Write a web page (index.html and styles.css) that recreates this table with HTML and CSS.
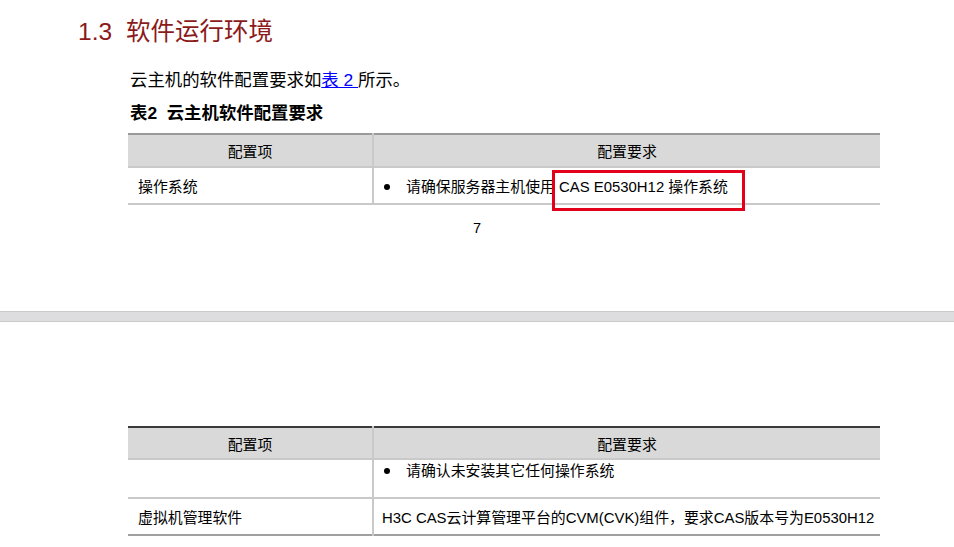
FILE: index.html
```html
<!DOCTYPE html>
<html lang="zh-CN">
<head>
<meta charset="utf-8">
<title>1.3 软件运行环境</title>
<link rel="stylesheet" href="styles.css">
</head>
<body>
<div class="page page-one">
  <h2 class="section-title"><span class="num">1.3</span>软件运行环境</h2>
  <div class="content">
    <p class="para">云主机的软件配置要求如<a class="xref" href="#t2">表 2 </a>所示。</p>
    <p class="caption" id="t2">表2&nbsp; 云主机软件配置要求</p>
    <table class="spec">
      <colgroup><col class="c1"><col class="c2"></colgroup>
      <thead>
        <tr><th>配置项</th><th class="th2">配置要求</th></tr>
      </thead>
      <tbody>
        <tr class="r-os"><td>操作系统</td><td class="td2"><span class="dot"></span>请确保服务器主机使用 CAS E0530H12 操作系统</td></tr>
      </tbody>
    </table>
  </div>
  <div class="page-num">7</div>
  <div class="highlight"></div>
</div>
<div class="page-gap"></div>
<div class="page page-two">
  <div class="content">
    <table class="spec spec-two">
      <colgroup><col class="c1"><col class="c2"></colgroup>
      <thead>
        <tr><th>配置项</th><th class="th2">配置要求</th></tr>
      </thead>
      <tbody>
        <tr class="r-cont"><td></td><td class="td2"><span class="dot"></span>请确认未安装其它任何操作系统</td></tr>
        <tr class="r-vm"><td>虚拟机管理软件</td><td class="td2">H3C CAS云计算管理平台的CVM(CVK)组件，要求CAS版本号为E0530H12</td></tr>
      </tbody>
    </table>
  </div>
</div>
</body>
</html>
```

FILE: styles.css
```css
html, body {
  margin: 0;
  padding: 0;
  background: #ffffff;
}
body {
  width: 954px;
  font-family: "Liberation Sans", "Noto Sans CJK SC", sans-serif;
  color: #000;
}
.page {
  position: relative;
}
.page-one {
  height: 311px;
  padding-top: 17px;
  box-sizing: border-box;
}
.section-title {
  margin: 0 0 0 78px;
  font-size: 24.5px;
  line-height: 30px;
  font-weight: normal;
  color: #8b1a1a;
}
.section-title .num {
  margin-right: 14px;
}
.content {
  margin-left: 128px;
  width: 752px;
}
.para {
  margin: 21px 0 0 2px;
  font-size: 17.4px;
  line-height: 24px;
}
.xref {
  color: #0000ff;
  text-decoration: underline;
}
.caption {
  margin: 10px 0 0 2px;
  font-size: 17.4px;
  line-height: 22px;
  font-weight: 600;
}
.spec {
  margin-top: 9px;
  width: 752px;
  border-collapse: collapse;
  table-layout: fixed;
  font-size: 14.9px;
}
.spec .c1 { width: 245px; }
.spec .c2 { width: 507px; }
.spec thead tr {
  background: #d9d9d9;
  border-top: 2px solid #9a9a9a;
  border-bottom: 2px solid #c9c9c9;
}
.spec th {
  height: 31px;
  padding: 0;
  font-weight: normal;
  text-align: center;
  vertical-align: middle;
}
.spec th.th2, .spec td.td2 {
  border-left: 2px solid #c9c9c9;
}
.spec td {
  padding: 0 0 0 10px;
  vertical-align: middle;
  white-space: nowrap;
}
.spec td.td2 {
  padding-left: 8px;
}
.spec tbody tr {
  border-bottom: 2px solid #c9c9c9;
}
.r-os td { height: 35px; }
.dot {
  display: inline-block;
  width: 6px;
  height: 6px;
  border-radius: 50%;
  background: #000;
  margin: 0 16px 2px 2px;
  vertical-align: middle;
}
.page-num {
  margin-top: 13px;
  text-align: center;
  font-size: 14.6px;
  line-height: 20px;
}
.highlight {
  position: absolute;
  left: 552px;
  top: 170px;
  width: 193px;
  height: 41px;
  box-sizing: border-box;
  border: 3px solid #e3001b;
}
.page-gap {
  height: 9px;
  background: #dddde0;
  border-top: 1px solid #cacaca;
  border-bottom: 1px solid #cacaca;
}
.page-two {
  padding-top: 104px;
}
.spec-two {
  margin-top: 0;
}
.spec-two thead tr {
  border-top: 2px solid #3a3a3a;
}
.spec-two th { height: 30px; }
.r-cont td {
  height: 36px;
  vertical-align: top;
  padding-top: 1px;
  line-height: 20px;
}
.r-vm td { height: 35px; }
.spec-two tbody tr.r-vm {
  border-bottom: 2px solid #a0a0a0;
}
```
